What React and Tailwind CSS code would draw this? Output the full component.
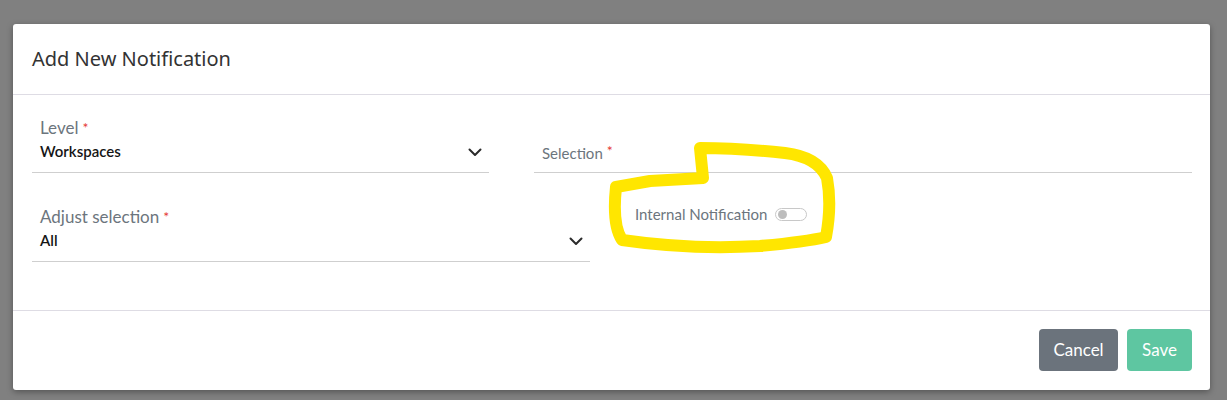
const Chevron = () => (
  <svg width="14" height="9" viewBox="0 0 14 9" fill="none" className="shrink-0">
    <path d="M1.5 1.5 L7 7 L12.5 1.5" stroke="#2b2b2b" strokeWidth="2" strokeLinecap="round" strokeLinejoin="round" />
  </svg>
)

const Req = () => <span className="text-[#e53935] text-[14px] align-top ml-[4px]">*</span>

function SelectField({ label, value, width }) {
  return (
    <div className={`${width} shrink-0 border-b border-[#cfcfcf]`}>
      <div className="pl-2 text-[17px] leading-[20px] text-[#6c757d]">
        {label}
        <Req />
      </div>
      <div className="h-[34px] flex items-start justify-between pl-2 pt-[3px]">
        <span className="text-[15px] leading-[20px] font-semibold text-[#151515]">{value}</span>
        <span className="pr-[7px] pt-[7px]">
          <Chevron />
        </span>
      </div>
    </div>
  )
}

export default function App() {
  return (
    <div
      className="relative h-[400px] w-[1227px] bg-[#808080] pt-[24px] pl-[13px] overflow-hidden"
      style={{ fontFamily: 'Lato, "Noto Sans", sans-serif' }}
    >
      <div className="w-[1197px] h-[366px] bg-white rounded-[3px] shadow-[0_2px_6px_rgba(0,0,0,0.35)] flex flex-col">
        <div className="h-[71px] shrink-0 border-b border-[#dedce4] flex items-center pl-[19px]">
          <h2
            className="text-[20px] text-[#333] leading-none"
            style={{ fontFamily: '"Noto Sans", "Open Sans", sans-serif' }}
          >
            Add New Notification
          </h2>
        </div>

        <div className="h-[216px] shrink-0 border-b border-[#dedce4] pt-[23px] pl-[19px] pr-[18px]">
          <div className="flex gap-[45px] items-end">
            <SelectField label="Level" value="Workspaces" width="w-[457px]" />
            <div className="flex-1 border-b border-[#cfcfcf] pl-2 pb-[7px]">
              <span className="text-[15px] leading-[20px] text-[#6c757d]">
                Selection
                <Req />
              </span>
            </div>
          </div>

          <div className="flex mt-[34px]">
            <SelectField label="Adjust selection" value="All" width="w-[558px]" />
            <div className="ml-[45px] -mt-[2px] flex items-start">
              <span className="text-[15px] leading-[18px] text-[#6c757d]">Internal Notification</span>
              <span className="ml-[8px] mt-[3px] w-[32px] h-[13px] rounded-full border border-[#c8c8c8] bg-white flex items-center pl-[2px]">
                <span className="w-[9px] h-[9px] rounded-full bg-[#bdbdbd]" />
              </span>
            </div>
          </div>
        </div>

        <div className="flex-1 flex justify-end items-start pt-[18px] pr-[18px] gap-[9px]">
          <button className="h-[42px] w-[79px] rounded-[4px] bg-[#6b737c] text-white text-[17px]">Cancel</button>
          <button className="h-[42px] w-[65px] rounded-[4px] bg-[#5ec6a1] text-white text-[17px]">Save</button>
        </div>
      </div>

      <svg className="absolute left-0 top-0 pointer-events-none" width="1227" height="400">
        <path
          d="M700 148 L703 178 L650 181 L616 187 Q612 225 622 240 Q690 250 760 246 Q805 242 826 237 Q832 205 827 178 Q818 157 785 153 Q740 148 700 148 Z"
          fill="none"
          stroke="#ffe600"
          strokeWidth="12"
          strokeLinejoin="round"
        />
      </svg>
    </div>
  )
}
